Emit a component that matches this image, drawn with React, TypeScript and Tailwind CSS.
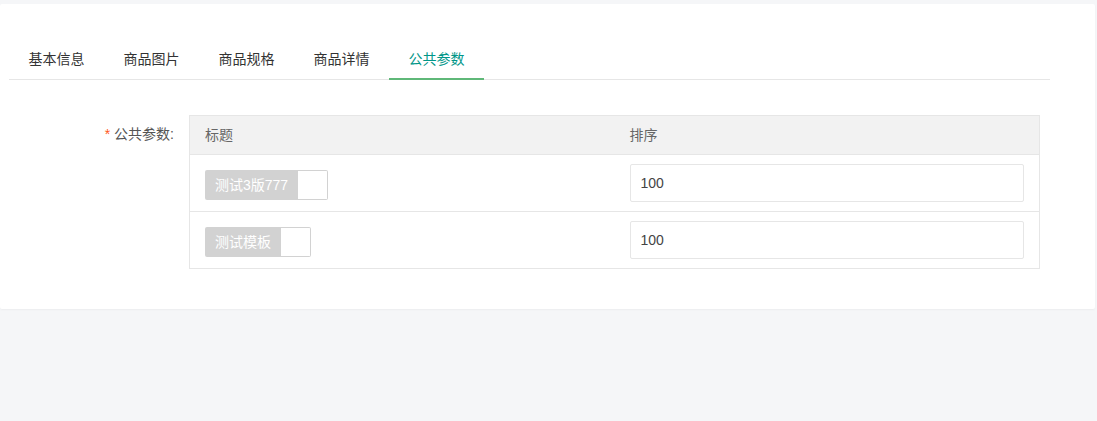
import React from "react";

const tabs = ["基本信息", "商品图片", "商品规格", "商品详情", "公共参数"];

const rows = [
  { title: "测试3版777", sort: "100" },
  { title: "测试模板", sort: "100" },
];

export default function App() {
  const active = 4;

  return (
    <div
      className="h-[421px] bg-[#f5f6f8] pt-[4px] pr-[2px] text-[14px] text-[#333]"
      style={{ fontFamily: '"Liberation Sans", "Noto Sans CJK SC", sans-serif' }}
    >
      <div className="h-[305px] rounded-[2px] bg-white pl-[9px] pt-[35px] shadow-[0_1px_2px_rgba(0,0,0,0.04)]">
        {/* tabs */}
        <ul className="flex w-[1041px] border-b border-[#e6e6e6]">
          {tabs.map((t, i) => (
            <li
              key={t}
              className={`relative h-[40px] w-[95px] text-center leading-[40px] ${
                i === active ? "text-[#009688]" : "text-[#333]"
              }`}
            >
              {t}
              {i === active && (
                <span className="absolute bottom-[-1px] left-0 h-[2px] w-full bg-[#5fb878]" />
              )}
            </li>
          ))}
        </ul>

        {/* form item */}
        <div className="mt-[35px] flex">
          <label className="w-[180px] shrink-0 py-[9px] pr-[15px] text-right leading-[20px] text-[#555]">
            <span className="mr-[4px] text-[#ff5722]">*</span>
            公共参数:
          </label>
          <table className="w-[851px] table-fixed border-collapse border border-[#e6e6e6]">
            <thead>
              <tr className="bg-[#f2f2f2]">
                <th className="h-[39px] border-b border-[#e6e6e6] px-[15px] text-left font-normal text-[#666]">
                  标题
                </th>
                <th className="h-[39px] border-b border-[#e6e6e6] px-[15px] text-left font-normal text-[#666]">
                  排序
                </th>
              </tr>
            </thead>
            <tbody>
              {rows.map((r) => (
                <tr key={r.title} className="h-[57px] border-b border-[#e6e6e6]">
                  <td className="px-[15px] py-[9px] align-top">
                    <div className="mt-[6px] inline-flex h-[30px] leading-[30px]">
                      <span className="rounded-l-[2px] bg-[#d2d2d2] px-[10px] text-white">
                        {r.title}
                      </span>
                      <span className="h-[30px] w-[30px] rounded-r-[2px] border border-l-0 border-[#d2d2d2] bg-white" />
                    </div>
                  </td>
                  <td className="px-[15px] py-[9px]">
                    <input
                      defaultValue={r.sort}
                      className="block h-[38px] w-full rounded-[2px] border border-[#e6e6e6] pl-[10px] text-[14px] text-[#444] outline-none"
                    />
                  </td>
                </tr>
              ))}
            </tbody>
          </table>
        </div>
      </div>
    </div>
  );
}
